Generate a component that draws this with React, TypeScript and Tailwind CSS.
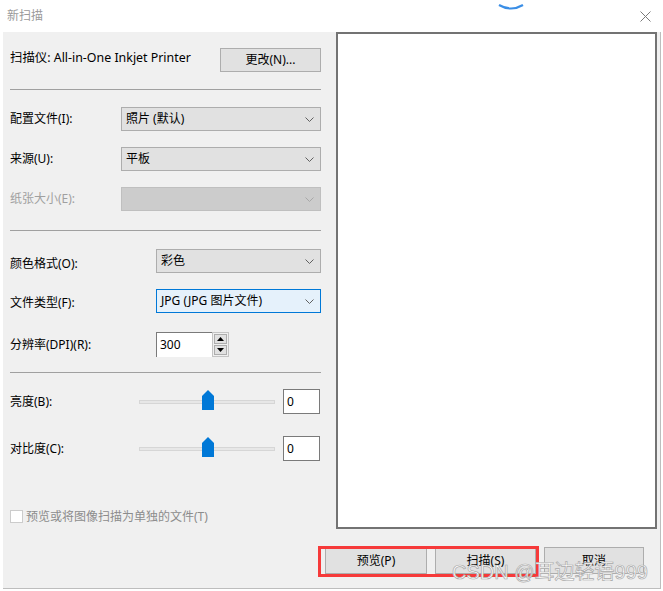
import type { ReactNode } from "react";

const font = "font-['Noto_Sans','Noto_Sans_CJK_SC',sans-serif]";

function Chevron({ color = "#606060" }: { color?: string }) {
  return (
    <svg width="9" height="5" viewBox="0 0 9 5" className="shrink-0">
      <path d="M0.5 0.5 L4.5 4.5 L8.5 0.5" fill="none" stroke={color} strokeWidth="1" />
    </svg>
  );
}

function Select({
  value,
  width,
  variant = "normal",
}: {
  value?: string;
  width: string;
  variant?: "normal" | "focus" | "disabled";
}) {
  const box =
    variant === "focus"
      ? "bg-[#e5f1fb] border-[#0078d7]"
      : variant === "disabled"
        ? "bg-[#cccccc] border-[#bfbfbf]"
        : "bg-[#e1e1e1] border-[#adadad]";
  return (
    <div className={`${width} h-[24px] border flex items-center justify-between pl-[4px] pr-[6px] ${box}`}>
      <span className="text-[12px] text-black leading-none">{value}</span>
      <Chevron color={variant === "disabled" ? "#a8a8a8" : "#606060"} />
    </div>
  );
}

function Row({
  label,
  children,
  disabled,
  className = "",
  labelClass = "",
}: {
  label: string;
  children: ReactNode;
  disabled?: boolean;
  className?: string;
  labelClass?: string;
}) {
  return (
    <div className={`h-[24px] flex items-center justify-between ${className}`}>
      <span className={`text-[12px] leading-none ${disabled ? "text-[#a0a0a0]" : "text-black"} ${labelClass}`}>{label}</span>
      {children}
    </div>
  );
}

function Slider() {
  return (
    <div className="relative w-[136px] h-[20px] flex items-center">
      <div className="w-full h-[4px] bg-[#e7e7e7] border border-[#d6d6d6]" />
      <svg width="12" height="20" viewBox="0 0 12 20" className="absolute left-[63px] top-[-2px]">
        <path d="M0 6 L6 0 L12 6 L12 20 L0 20 Z" fill="#0078d7" />
      </svg>
    </div>
  );
}

function ValueBox({ value }: { value: string }) {
  return (
    <div className="w-[37px] h-[25px] bg-white border border-[#7a7a7a] flex items-center pl-[3px] text-[12px] leading-none text-black">
      {value}
    </div>
  );
}

function Button({ label, className = "" }: { label: string; className?: string }) {
  return (
    <div className={`bg-[#e1e1e1] border border-[#adadad] flex items-center justify-center text-[12px] leading-none text-black ${className}`}>
      {label}
    </div>
  );
}

export default function App() {
  return (
    <div className={`relative w-[663px] h-[591px] bg-white overflow-hidden ${font}`}>
      {/* title bar */}
      <div className="h-[32px] flex items-center justify-between pl-[7px] pr-[12px]">
        <span className="text-[12px] leading-none text-[#9a9a9a]">新扫描</span>
        <svg width="11" height="11" viewBox="0 0 11 11">
          <path d="M0.5 0.5 L10.5 10.5 M10.5 0.5 L0.5 10.5" stroke="#7a7a7a" strokeWidth="1" />
        </svg>
      </div>
      <svg width="26" height="10" viewBox="0 0 26 10" className="absolute left-[498px] top-[2px]">
        <path d="M1 3 Q13 10 25 3" fill="none" stroke="#3a8ee6" strokeWidth="2.2" />
      </svg>

      {/* body */}
      <div className="ml-[3px] w-[658px] h-[557px] bg-[#f0f0f0] border-r border-b border-[#bdbdbd] flex flex-col">
        <div className="flex">
          {/* left panel */}
          <div className="w-[333px] pl-[7px] pr-[15px] flex flex-col">
            <div className="mt-[16px] h-[24px] flex items-center justify-between">
              <span className="text-[12.4px] leading-none text-black pb-[4px]">扫描仪: All-in-One Inkjet Printer</span>
              <Button label="更改(N)..." className="w-[101px] h-[24px]" />
            </div>
            <div className="mt-[17px] h-px bg-[#a0a0a0]" />

            <Row label="配置文件(I):" className="mt-[17px]">
              <Select value="照片 (默认)" width="w-[200px]" />
            </Row>
            <Row label="来源(U):" className="mt-[16px]">
              <Select value="平板" width="w-[200px]" />
            </Row>
            <Row label="纸张大小(E):" disabled className="mt-[16px]">
              <Select width="w-[200px]" variant="disabled" />
            </Row>
            <div className="mt-[19px] h-px bg-[#a0a0a0]" />

            <Row label="颜色格式(O):" className="mt-[18px]" labelClass="pt-[6px]">
              <Select value="彩色" width="w-[165px]" />
            </Row>
            <Row label="文件类型(F):" className="mt-[16px]" labelClass="pt-[4px]">
              <Select value="JPG (JPG 图片文件)" width="w-[165px]" variant="focus" />
            </Row>
            <div className="mt-[19px] h-[25px] flex items-center">
              <span className="text-[12px] leading-none text-black w-[146px]">分辨率(DPI)(R):</span>
              <div className="w-[56px] h-[25px] bg-white border-t border-l border-[#7a7a7a] flex items-center pl-[3px] text-[12px] leading-none text-black">
                300
              </div>
              <div className="w-[17px] h-[25px] border border-[#c4c4c4] bg-[#f0f0f0] flex flex-col p-px gap-px">
                <div className="flex-1 bg-[#e1e1e1] border border-[#adadad] flex items-center justify-center">
                  <svg width="7" height="4" viewBox="0 0 7 4"><path d="M0 4 L3.5 0 L7 4 Z" fill="#000" /></svg>
                </div>
                <div className="flex-1 bg-[#e1e1e1] border border-[#adadad] flex items-center justify-center">
                  <svg width="7" height="4" viewBox="0 0 7 4"><path d="M0 0 L3.5 4 L7 0 Z" fill="#000" /></svg>
                </div>
              </div>
            </div>
            <div className="mt-[15px] h-px bg-[#a0a0a0]" />

            <div className="mt-[16px] h-[25px] flex items-center">
              <span className="text-[12px] leading-none text-black w-[129px]">亮度(B):</span>
              <Slider />
              <div className="ml-[8px]"><ValueBox value="0" /></div>
            </div>
            <div className="mt-[22px] h-[25px] flex items-center">
              <span className="text-[12px] leading-none text-black w-[129px]">对比度(C):</span>
              <Slider />
              <div className="ml-[8px]"><ValueBox value="0" /></div>
            </div>

            <div className="mt-[49px] h-[13px] flex items-center gap-[3px]">
              <div className="w-[13px] h-[13px] bg-white border border-[#cccccc]" />
              <span className="text-[12px] leading-none text-[#8c8c8c]">预览或将图像扫描为单独的文件(T)</span>
            </div>
          </div>

          {/* preview pane */}
          <div className="w-[321px] h-[497px] bg-white border-2 border-[#737373]" />
        </div>

        {/* buttons */}
        <div className="mt-[18px] flex pl-[322px] gap-[8px] relative">
          <Button label="预览(P)" className="w-[102px] h-[27px]" />
          <Button label="扫描(S)" className="w-[101px] h-[27px]" />
          <Button label="取消" className="w-[100px] h-[27px]" />
          <div className="absolute left-[315px] top-[-1px] w-[221px] h-[31px] border-[3px] border-[#f63a3a]" />
        </div>
      </div>

      {/* watermark */}
      <span className="absolute left-[452px] top-[558px] text-[20px] leading-[28px] text-white [-webkit-text-stroke:0.7px_#a8a8a8] font-['Liberation_Sans','Noto_Sans_CJK_SC',sans-serif]">
        CSDN @耳边轻语999
      </span>
    </div>
  );
}
